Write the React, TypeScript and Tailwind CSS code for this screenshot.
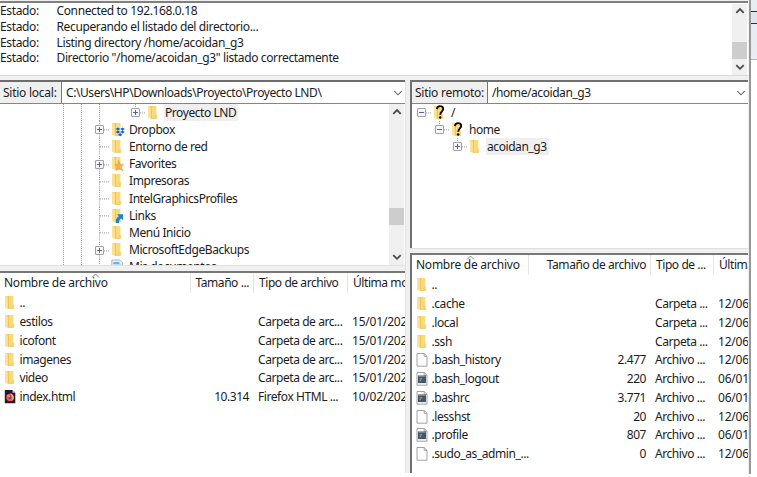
import React from "react";

type IconKind = "folder" | "dropbox" | "star" | "link" | "question" | "docs" | "file" | "script" | "firefox";

const FolderShape = () => (
  <g>
    <path d="M1 1 H9.4 V9.2 L10.2 9.9 V13.1 L9.7 13.5 H4 L1 12.5 Z" fill="#fada80" />
    <path d="M3.6 1 H5 V13 H3.6 Z" fill="#efc556" />
    <path d="M1 1.2 L3.8 2.8 V14.2 L1 12.6 Z" fill="#fce294" />
    <path d="M4 13.3 H9.8" stroke="#eec257" strokeWidth="0.8" />
    <path d="M8.2 9.8 V13" stroke="#f3cc68" strokeWidth="0.9" />
  </g>
);

function Icon({ kind }: { kind: IconKind }) {
  return (
    <svg width="16" height="16" viewBox="0 0 16 16" className="block shrink-0 overflow-visible">
      {["folder", "dropbox", "star", "link", "question"].includes(kind) && <FolderShape />}
      {kind === "dropbox" && (
        <path fill="#1262e8" d="M6.9 5.4 9.2 6.9 6.9 8.4 4.6 6.9Z M11.5 5.4 13.8 6.9 11.5 8.4 9.2 6.9Z M6.9 8.4 9.2 9.9 6.9 11.4 4.6 9.9Z M11.5 8.4 13.8 9.9 11.5 11.4 9.2 9.9Z M9.2 11.2 11.5 12.7 9.2 14.3 6.9 12.7Z" />
      )}
      {kind === "star" && (
        <path fill="#f7b04c" stroke="#ea9440" strokeWidth="0.5" d="M7.6 4.2 9.1 8 12.5 8.8 10.2 11 12 15 8.4 12.7 5 14.4 6.1 11 4 8.5 6.9 8.2Z" />
      )}
      {kind === "link" && (
        <path fill="#1d83d4" d="M6 6.2 H12 V12.2 L10.2 10.6 C8.6 11.3 7.9 12.6 8 15 H4.7 C4.5 11.8 5.4 9.7 7.9 8.2Z" />
      )}
      {kind === "question" && (
        <g>
          <path d="M3.9 4.1 C4.2 0.2 10.3 0 10.2 4 C10.1 6.4 7.3 6.6 7.2 9.8" fill="none" stroke="#080808" strokeWidth="1.9" />
          <circle cx="7.1" cy="12.5" r="1.25" fill="#080808" />
        </g>
      )}
      {kind === "docs" && (
        <g>
          <path d="M0.8 1 H8.8 L11.4 3.5 V15 H0.8Z" fill="#e6f3fb" stroke="#9aa6ad" strokeWidth="0.8" />
          <path d="M2.3 4 H8.4 M2.3 6.5 H10" stroke="#3ca0dc" strokeWidth="1.4" />
        </g>
      )}
      {(kind === "file" || kind === "script") && (
        <path d="M1 1.5 H8.2 L11 4.3 V14.2 H1Z M8.2 1.5 V4.3 H11" fill="#fcfcfc" stroke="#979797" strokeWidth="0.9" />
      )}
      {kind === "script" && (
        <g>
          <rect x="2" y="4.5" width="8" height="7.6" fill="#455662" />
          <path d="M2.4 5.6 H9.6" stroke="#8497a2" strokeWidth="0.8" />
          <path d="M3.6 7.9 H6.2 M3.6 9.7 H5" stroke="#a9bec9" strokeWidth="0.9" />
        </g>
      )}
      {kind === "firefox" && (
        <g>
          <path d="M0.8 1 H8.5 L11.3 3.8 V14.2 H0.8Z" fill="#25143f" />
          <path d="M8.5 1 V3.8 H11.3Z" fill="#c9bfd8" />
          <circle cx="6" cy="8.4" r="3.7" fill="#ff5a36" />
          <path d="M6.2 3.9 C10.3 5.8 11 10.4 7.7 11.8 C9 9.2 8.3 7.4 6.2 3.9Z" fill="#ffc52e" />
          <circle cx="5.8" cy="8.4" r="1.8" fill="#6843ce" />
          <path d="M2.3 5.8 C4 6 5 6.7 6.4 7.4 L4.6 8.4Z" fill="#ff9b2f" />
        </g>
      )}
    </svg>
  );
}

function Chevron({ up = false, thin = false }: { up?: boolean; thin?: boolean }) {
  return (
    <svg width="10" height="8" viewBox="0 0 10 8" className="block">
      <path d={up ? "M1.3 5.8 5 2.1 8.7 5.8" : "M1.3 2.1 5 5.8 8.7 2.1"} fill="none" stroke={thin ? "#666" : "#4a4a4a"} strokeWidth={thin ? 1.1 : 1.8} />
    </svg>
  );
}

/* Connector cell of the tree: a dotted trunk, a branch and an optional expander. */
function Guide({ box, top = true, bottom = true }: { box?: "+" | "-"; top?: boolean; bottom?: boolean }) {
  return (
    <svg width="29" height="17.2" viewBox="0 0 29 17.2" className="block shrink-0">
      <g stroke="#999" strokeWidth="1" strokeDasharray="1 1">
        {top && <path d="M17.5 0 V8.6" />}
        {bottom && <path d="M17.5 8.6 V17.2" />}
        <path d="M18 8.9 H27" />
      </g>
      {box && (
        <g>
          <rect x="13.5" y="4.5" width="8" height="8" rx="0.5" fill="#f7f7f7" stroke="#a0a0a0" />
          <path d={box === "+" ? "M15 8.5 H20 M17.5 6 V11" : "M15 8.5 H20"} stroke="#4a64aa" />
        </g>
      )}
    </svg>
  );
}

function Trunk({ line = true }: { line?: boolean }) {
  return (
    <div className="flex h-full w-9 shrink-0">
      <div className={line ? "ml-[17px] h-full border-l border-dotted border-[#999]" : ""} />
    </div>
  );
}

function TreeRow({ icon, label, box, selected, children, top, bottom }: {
  icon: IconKind; label: string; box?: "+" | "-"; selected?: boolean; children?: React.ReactNode; top?: boolean; bottom?: boolean;
}) {
  return (
    <div className="flex h-[17.2px] shrink-0 items-center">
      {children}
      <Guide box={box} top={top} bottom={bottom} />
      <Icon kind={icon} />
      <span className={selected ? "ml-px flex h-[17px] items-center bg-[#efefef] pr-[2px] pl-[1px]" : "pl-[2px]"}>{label}</span>
    </div>
  );
}

function ScrollBar({ thumb, className }: { thumb: string; className: string }) {
  return (
    <div className={"flex shrink-0 flex-col items-center bg-[#f0f0f0] " + className}>
      <div className="flex h-[15px] items-center"><Chevron up /></div>
      <div className="flex w-full flex-1 flex-col"><div className={"w-full bg-[#cdcdcd] " + thumb} /></div>
      <div className="flex h-[17px] items-center"><Chevron /></div>
    </div>
  );
}

function PathBar({ label, path, labelWidth }: { label: string; path: string; labelWidth: string }) {
  return (
    <div className="flex h-[22px] shrink-0 border-b border-[#858585] bg-white">
      <div className={"flex shrink-0 items-center bg-[#efefef] pl-[3px] tracking-[-0.25px] " + labelWidth}>{label}</div>
      <div className="flex flex-1 items-center border-l border-[#777] pl-[4px]">
        <span className="flex-1">{path}</span>
        <span className="pr-[2px]"><Chevron thin /></span>
      </div>
    </div>
  );
}

type Entry = [IconKind, string, string, string, string];

function FileList({ entries, columns, header, sortClass }: {
  entries: Entry[]; columns: string; header: [string, string, string, string]; sortClass: string;
}) {
  return (
    <div className="min-h-0 flex-1 overflow-hidden border-t-2 border-[#777] bg-white">
      <div className={"relative grid h-[20px] items-center " + columns}>
        <div className={"absolute top-0 flex " + sortClass}>
          <svg width="9" height="5" viewBox="0 0 9 5"><path d="M1 4.5 4.5 1 8 4.5" fill="none" stroke="#888" /></svg>
        </div>
        {header.map((h, i) => (
          <div key={h} className={"flex h-full items-center overflow-hidden " + (i === 0 ? "pl-1 tracking-[-0.25px]" : i === 1 ? "justify-end border-l border-[#e5e5e5] pr-1" : "border-l border-[#e5e5e5] pl-[5px]")}>{h}</div>
        ))}
      </div>
      <div className="pt-[1px]">
        {entries.map((e) => (
          <div key={e[1]} className={"grid h-[18.75px] items-center " + columns}>
            <div className="flex items-center pl-1"><Icon kind={e[0]} /><span className="-ml-[0.5px]">{e[1]}</span></div>
            <div className="pr-1 text-right tracking-[-0.45px]">{e[2]}</div>
            <div className="pl-[5px]">{e[3]}</div>
            <div className="overflow-hidden pl-[5px] tracking-[-0.2px]">{e[4]}</div>
          </div>
        ))}
      </div>
    </div>
  );
}

const log = ["Connected to 192.168.0.18", "Recuperando el listado del directorio...", "Listing directory /home/acoidan_g3", "Directorio \"/home/acoidan_g3\" listado correctamente"];

const localTree: [IconKind, string, ("+" | "-")?][] = [
  ["dropbox", "Dropbox", "+"], ["folder", "Entorno de red"], ["star", "Favorites", "+"], ["folder", "Impresoras"],
  ["folder", "IntelGraphicsProfiles"], ["link", "Links"], ["folder", "Menú Inicio"], ["folder", "MicrosoftEdgeBackups", "+"], ["docs", "Mis documentos"],
];

const localFiles: Entry[] = [
  ["folder", "..", "", "", ""],
  ["folder", "estilos", "", "Carpeta de arc...", "15/01/2020"],
  ["folder", "icofont", "", "Carpeta de arc...", "15/01/2020"],
  ["folder", "imagenes", "", "Carpeta de arc...", "15/01/2020"],
  ["folder", "video", "", "Carpeta de arc...", "15/01/2020"],
  ["firefox", "index.html", "10.314", "Firefox HTML ...", "10/02/2020"],
];

const remoteFiles: Entry[] = [
  ["folder", "..", "", "", ""],
  ["folder", ".cache", "", "Carpeta ...", "12/06/"],
  ["folder", ".local", "", "Carpeta ...", "12/06/"],
  ["folder", ".ssh", "", "Carpeta ...", "12/06/"],
  ["file", ".bash_history", "2.477", "Archivo ...", "12/06/"],
  ["script", ".bash_logout", "220", "Archivo ...", "06/01/"],
  ["script", ".bashrc", "3.771", "Archivo ...", "06/01/"],
  ["file", ".lesshst", "20", "Archivo ...", "12/06/"],
  ["script", ".profile", "807", "Archivo ...", "06/01/"],
  ["file", ".sudo_as_admin_...", "0", "Archivo ...", "12/06/"],
];

export default function App() {
  return (
    <div className="flex h-[477px] w-[757px] overflow-hidden bg-white font-['Noto_Sans','Open_Sans',sans-serif] text-[12px] leading-4 tracking-[-0.43px] whitespace-nowrap text-[#1c1c1c]">
      <div className="flex h-[473px] w-[748px] shrink-0 flex-col overflow-hidden bg-[#f0f0f0]">
        <div className="h-[1px] shrink-0" />
        <div className="flex h-[75px] shrink-0 border-t-2 border-b border-t-[#808080] border-b-[#dcdcdc] bg-white pr-[1px]">
          <div className="flex-1 pt-[0.4px] tracking-[-0.37px]">
            {log.map((m) => (
              <div key={m} className="flex h-[15.7px] items-center">
                <span className="w-[56.5px]">Estado:</span><span>{m}</span>
              </div>
            ))}
          </div>
          <ScrollBar className="mt-[1px] w-[15px]" thumb="mt-[23px] h-[17px]" />
        </div>
        <div className="h-[4px] shrink-0" />
        <div className="flex min-h-0 flex-1">
          <div className="flex w-[405px] shrink-0 flex-col border-t-2 border-[#6c6c6c]">
            <PathBar label="Sitio local:" path="C:\Users\HP\Downloads\Proyecto\Proyecto LND\" labelWidth="w-[61px]" />
            <div className="flex h-[162px] shrink-0 overflow-hidden border-b border-[#e0e0e0] bg-white pr-[1px]">
              <div className="w-[64px] shrink-0 border-r border-dotted border-[#999]" />
              <div className="w-[18px] shrink-0 border-r border-dotted border-[#999]" />
              <div className="-ml-px flex flex-1 flex-col overflow-hidden pl-px">
                <TreeRow icon="folder" label="Proyecto LND" box="+" selected bottom={false}><Trunk /></TreeRow>
                {localTree.map(([icon, label, box]) => <TreeRow key={label} icon={icon} label={label} box={box} />)}
              </div>
              <ScrollBar className="w-[15px]" thumb="mt-[89px] h-[17px]" />
            </div>
            <div className="h-[5px] shrink-0" />
            <FileList
              entries={localFiles}
              columns="grid-cols-[190px_63px_94px_58px]"
              header={["Nombre de archivo", "Tamaño ...", "Tipo de archivo", "Última modificación"]}
              sortClass="left-[91px]"
            />
          </div>
          <div className="w-[5px] shrink-0 border-l border-[#e2e2e2]" />
          <div className="flex w-[338px] shrink-0 flex-col border-t-2 border-l-2 border-[#707070]">
            <PathBar label="Sitio remoto:" path="/home/acoidan_g3" labelWidth="w-[75px]" />
            <div className="flex h-[144px] shrink-0 flex-col bg-white">
              <div className="-ml-[8px] flex flex-col">
                <TreeRow icon="question" label="/" box="-" top={false} bottom={false} />
                <TreeRow icon="question" label="home" box="-" bottom={false}><div className="w-[18px]" /></TreeRow>
                <TreeRow icon="folder" label="acoidan_g3" box="+" selected bottom={false}><Trunk line={false} /></TreeRow>
              </div>
            </div>
            <div className="-ml-[2px] h-[5px] shrink-0 border-t border-[#dedede] bg-[#f0f0f0]" />
            <FileList
              entries={remoteFiles}
              columns="grid-cols-[116px_122px_63px_35px]"
              header={["Nombre de archivo", "Tamaño de archivo", "Tipo de ...", "Última"]}
              sortClass="left-[54px]"
            />
          </div>
        </div>
      </div>
      <div className="h-[474px] w-[3px] shrink-0 border-r-2 border-[#989898] bg-[#f0f0f0]" />
      <div className="flex w-[6px] flex-col">
        <div className="h-[11px] bg-[#e7edf3]" />
        <div className="h-[1px] bg-[#303030]" />
        <div className="h-[11px] bg-[#dfe5eb]" />
        <div className="h-[1px] bg-[#303030]" />
        <div className="h-[35px] bg-[#e9edf2]" />
        <div className="h-[1px] bg-[#b5b5b5]" />
      </div>
    </div>
  );
}
